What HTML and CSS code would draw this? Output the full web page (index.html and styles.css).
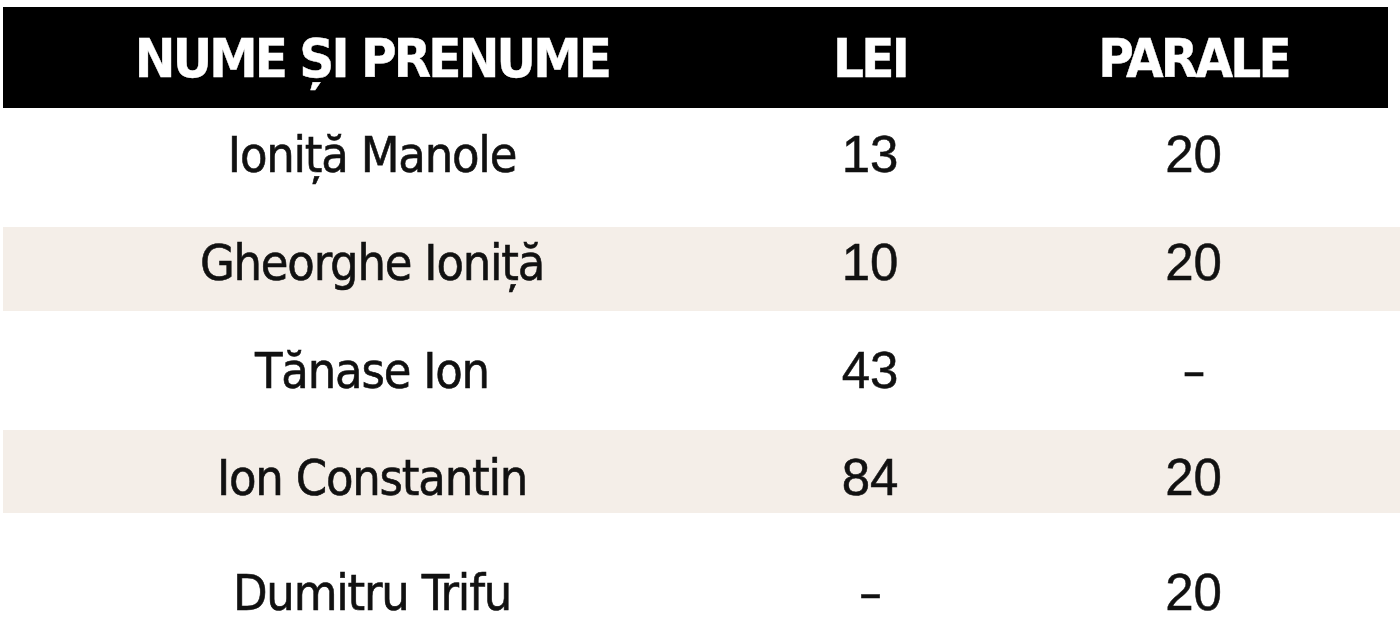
FILE: index.html
```html
<!DOCTYPE html>
<html lang="ro">
<head>
<meta charset="utf-8">
<title>Tabel</title>
<link rel="stylesheet" href="styles.css">
</head>
<body>
<div class="table">
  <div class="thead">
    <div class="th">NUME ȘI PRENUME</div>
    <div class="th">LEI</div>
    <div class="th">PARALE</div>
  </div>
  <div class="row">
    <div class="name">Ioniță Manole</div>
    <div class="num">13</div>
    <div class="num">20</div>
  </div>
  <div class="row alt">
    <div class="name">Gheorghe Ioniță</div>
    <div class="num">10</div>
    <div class="num">20</div>
  </div>
  <div class="row">
    <div class="name">Tănase Ion</div>
    <div class="num">43</div>
    <div class="dash">–</div>
  </div>
  <div class="row alt">
    <div class="name">Ion Constantin</div>
    <div class="num">84</div>
    <div class="num">20</div>
  </div>
  <div class="row">
    <div class="name">Dumitru Trifu</div>
    <div class="dash">–</div>
    <div class="num">20</div>
  </div>
</div>
</body>
</html>
```

FILE: styles.css
```css
html, body {
  margin: 0;
  padding: 0;
  background: #ffffff;
  overflow: hidden;
}

.table {
  padding: 7px 0 0 3px;
  height: 640px;
  box-sizing: border-box;
}

.thead {
  width: 1385px;
  height: 101px;
  background: #000000;
  display: grid;
  grid-template-columns: 738px 258px 1fr;
  align-items: center;
}

.th {
  color: #ffffff;
  font-family: "DejaVu Sans Condensed", "DejaVu Sans", sans-serif;
  font-weight: bold;
  font-size: 54px;
  letter-spacing: -2.8px;
  line-height: 50px;
  text-align: center;
  padding-top: 2px;
  -webkit-text-stroke: 0.4px #ffffff;
}

.row {
  display: grid;
  grid-template-columns: 738px 258px 389px;
  align-items: start;
  box-sizing: border-box;
  height: 119px;
  padding-top: 22px;
}

.row.alt {
  background: #f4eee8;
  height: 84px;
  padding-top: 11px;
}

.row:nth-child(4) {
  padding-top: 35px;
}

.row:nth-child(5) {
  height: 83px;
  padding-top: 23px;
}

.row:nth-child(6) {
  height: 127px;
  padding-top: 55px;
}

.name,
.dash {
  font-family: "DejaVu Sans Condensed", "DejaVu Sans", sans-serif;
  font-size: 50px;
  letter-spacing: -1.2px;
  line-height: 50px;
  color: #111111;
  text-align: center;
  -webkit-text-stroke: 0.6px #111111;
}

.num {
  font-family: "Liberation Sans", Arial, sans-serif;
  font-size: 51px;
  line-height: 50px;
  color: #111111;
  text-align: center;
  -webkit-text-stroke: 0.5px #111111;
}
```
